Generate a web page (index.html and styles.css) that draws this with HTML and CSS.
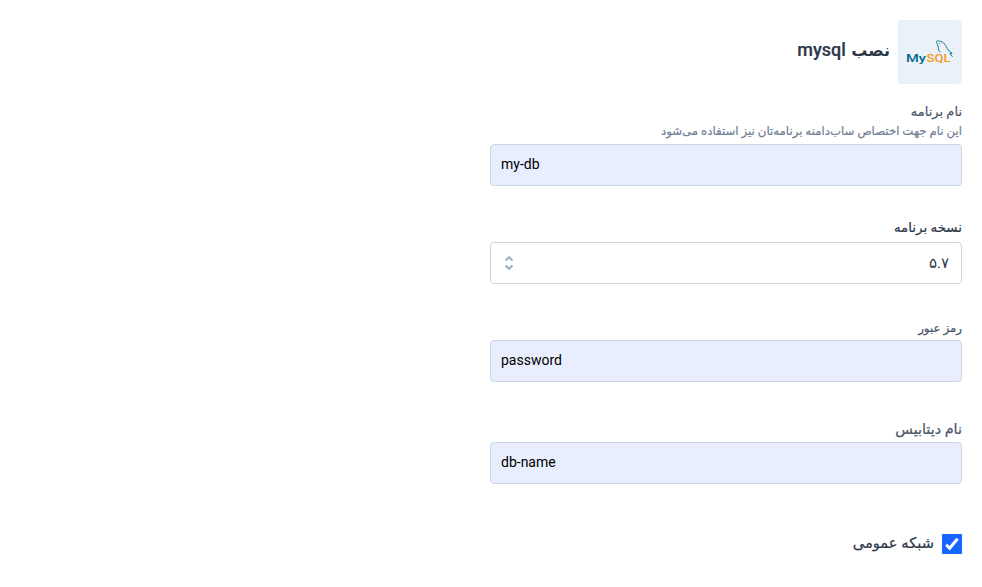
FILE: index.html
```html
<!DOCTYPE html>
<html lang="fa" dir="rtl">
<head>
<meta charset="utf-8">
<title>نصب mysql</title>
<link rel="stylesheet" href="styles.css">
</head>
<body>
<form class="install">
  <header class="heading">
    <div class="logo">
      <svg viewBox="0 0 64 64" width="64" height="64" direction="ltr">
        <g fill="none" stroke="#1b7c98" stroke-width="1" stroke-linecap="round" stroke-linejoin="round">
          <path d="M42 31.5L40.6 30.5C40.8 28 40 25.500 39 23.500C37.800 21.500 38.700 20.200 40.700 21C46 21.200 48 26 50.200 30.300L54.200 33.300L51.800 33.500L54.300 36.500"/>
          <path d="M41.700 23.500h.1"/>
        </g>
        <text class="logo-text logo-my" x="8" y="42" textLength="20" lengthAdjust="spacingAndGlyphs">My</text>
        <text class="logo-text logo-sql" x="28.500" y="42" textLength="24" lengthAdjust="spacingAndGlyphs">SQL</text>
      </svg>
    </div>
    <h1 class="title"><span class="fa">نصب</span> mysql</h1>
  </header>

  <div class="field field-name">
    <label class="label" for="app">نام برنامه</label>
    <p class="hint">این نام جهت اختصاص ساب‌دامنه برنامه‌تان نیز استفاده می‌شود</p>
    <input class="control filled" id="app" dir="ltr" value="my-db">
  </div>

  <div class="field field-version">
    <span class="label dark">نسخه برنامه</span>
    <div class="control select">
      <span class="version">۵.۷</span>
      <svg class="arrows" viewBox="0 0 10 16" width="10" height="16"><path d="M1.500 5.500L5 2.200L8.500 5.500M1.500 10.500L5 13.800L8.500 10.500"/></svg>
    </div>
  </div>

  <div class="field field-password">
    <label class="label" for="pass">رمز عبور</label>
    <input class="control filled" id="pass" dir="ltr" value="password">
  </div>

  <div class="field field-database">
    <label class="label" for="database">نام دیتابیس</label>
    <input class="control filled" id="database" dir="ltr" value="db-name">
  </div>

  <div class="public">
    <span class="checkbox"><svg viewBox="0 0 20 20" width="20" height="20"><path d="M4.200 10.800L7.600 14.200L15.600 4.800"/></svg></span>
    <span class="public-label">شبکه عمومی</span>
  </div>
</form>
</body>
</html>
```
FILE: styles.css
```css
* { box-sizing: border-box; }
body {
  margin: 0;
  background: #fff;
  color: #4a5568;
  font-family: Roboto, "DejaVu Sans", sans-serif;
  overflow: hidden;
}
.install { width: 492px; padding: 20px 20px 0 0; }
.heading { display: flex; height: 64px; gap: 8px; }
.logo { width: 64px; height: 64px; border-radius: 4px; background: #ebf1f8; }
.logo svg { display: block; }
.logo-text { font: 500 11.5px Roboto, sans-serif; direction: ltr; }
.logo-my { fill: #00678c; }
.logo-sql { fill: #f29a18; }
.title { margin: 0; padding-top: 18px; font-size: 18px; line-height: 24px; font-weight: 500; color: #2d3748; white-space: nowrap; word-spacing: 1px; -webkit-text-stroke: .2px currentColor; }
.fa { font-size: 16px; font-weight: 700; -webkit-text-stroke: 0; }
.field { display: flex; flex-direction: column; }
.field-name { margin-top: 18px; }
.field-version { margin-top: 32px; }
.field-password { margin-top: 34px; }
.field-database { margin-top: 38px; }
.label { height: 22px; line-height: 20px; font-size: 13px; white-space: nowrap; -webkit-text-stroke: .2px currentColor; }
.field-name .label { height: 20px; }
.field-version .label { height: 24px; font-size: 13.4px; }
.field-password .label { font-size: 11.8px; }
.field-database .label { font-size: 14.4px; }
.dark { color: #2d3748; }
.hint { margin: 0; height: 22px; line-height: 18px; font-size: 11.75px; color: #718096; white-space: nowrap; -webkit-text-stroke: .2px currentColor; }
.control { width: 472px; height: 42px; border: 1px solid #cbd5e0; border-radius: 4px; background: #fff; }
.filled { padding: 0 10px 2px; background: #e8eefe; color: #000; font: 14px Roboto, sans-serif; outline: 0; }
.select { display: flex; align-items: center; justify-content: space-between; padding: 0 12px 0 13px; color: #2d3748; }
.version { font-size: 15px; line-height: 20px; }
.arrows { fill: none; stroke: #a0aec0; stroke-width: 2; }
.public { display: flex; gap: 8px; margin-top: 50px; height: 20px; }
.checkbox { width: 20px; height: 20px; border-radius: 1px; background: #1766ff; }
.checkbox svg { display: block; fill: none; stroke: #fff; stroke-width: 3; }
.public-label { line-height: 18px; font-size: 14.7px; color: #2d3748; white-space: nowrap; -webkit-text-stroke: .2px currentColor; }
```
